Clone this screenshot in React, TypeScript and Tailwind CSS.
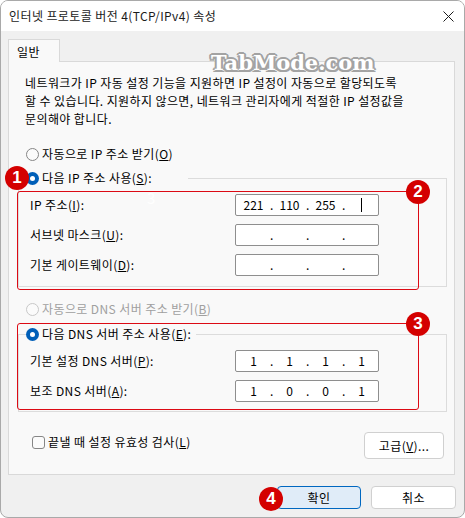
import React from "react";

function Radio({ checked = false, disabled = false }: { checked?: boolean; disabled?: boolean }) {
  if (checked) {
    return (
      <span className="w-[13px] h-[13px] rounded-full bg-[#005fb8] flex items-center justify-center shrink-0">
        <span className="w-[5px] h-[5px] rounded-full bg-white" />
      </span>
    );
  }
  return (
    <span
      className={
        disabled
          ? "w-[13px] h-[13px] rounded-full border border-[#c8c8c8] bg-[#fbfbfb] shrink-0"
          : "w-[13px] h-[13px] rounded-full border border-[#868686] bg-[#fbfbfb] shrink-0"
      }
    />
  );
}

function IpBox({ parts, cursor = false }: { parts: string[]; cursor?: boolean }) {
  return (
    <div className="w-[144px] h-[22px] border border-[#8e8e8e] rounded-[2px] bg-white flex items-center pl-[1px] text-black tracking-normal">
      {[0, 1, 2, 3].map((i) => (
        <React.Fragment key={i}>
          <span className="w-[33px] text-center leading-none flex justify-center items-center h-[14px]">
            {i === 3 && cursor ? <span className="w-[1px] h-[14px] bg-black" /> : parts[i]}
          </span>
          {i < 3 && <span className="w-[3px] text-center leading-none">.</span>}
        </React.Fragment>
      ))}
    </div>
  );
}

function Badge({ n, className }: { n: string; className: string }) {
  return (
    <div
      className={
        "absolute w-[24px] h-[24px] rounded-full bg-[#d40000] text-white flex items-center justify-center font-['Liberation_Sans',Arial,sans-serif] font-bold text-[17px] tracking-normal z-30 " +
        className
      }
    >
      {n}
    </div>
  );
}

export default function App() {
  return (
    <div className="w-[465px] h-[518px] bg-white font-['Noto_Sans_CJK_KR','Noto_Sans',sans-serif] text-[12px] tracking-[0.4px] text-black">
      <div className="relative w-full h-full border border-[#a9a9a9] rounded-[8px] overflow-hidden bg-[#f0f0f0] flex flex-col">
        {/* title bar */}
        <div className="h-[30px] bg-white flex items-center justify-between pl-[8px] pr-[10px] shrink-0">
          <span className="text-[#1b1b1b] leading-none">인터넷 프로토콜 버전 4(TCP/IPv4) 속성</span>
          <svg width="11" height="11" viewBox="0 0 11 11" className="mt-[1px]">
            <path d="M0.5 0.5 L10.5 10.5 M10.5 0.5 L0.5 10.5" stroke="#1b1b1b" strokeWidth="1" />
          </svg>
        </div>

        <div className="pt-[8px] pl-[7px]">
          {/* tab */}
          <div className="relative z-10 w-[52px] h-[23px] -mb-[1px] border border-b-0 border-[#d9d9d9] bg-[#f9f9f9] pl-[8px] pt-[3px]">
            일반
          </div>

          {/* panel */}
          <div className="w-[447px] h-[414px] border border-[#d9d9d9] bg-[#f9f9f9] pl-[9px]">
            <p className="ml-[7px] mt-[12px] leading-[18px] w-[420px]">
              네트워크가 IP 자동 설정 기능을 지원하면 IP 설정이 자동으로 할당되도록
              <br />할 수 있습니다. 지원하지 않으면, 네트워크 관리자에게 적절한 IP 설정값을
              <br />문의해야 합니다.
            </p>

            <div className="ml-[8px] mt-[16px] h-[20px] flex items-center gap-[3px]">
              <Radio />
              <span>
                자동으로 IP 주소 받기(<u>O</u>)
              </span>
            </div>

            <fieldset className="mt-[4px] w-[429px] border border-[#dcdcdc] pb-[10px]">
              <legend className="ml-[7px] pr-[36px] h-[20px] flex items-center gap-[3px]">
                <Radio checked />
                <span>
                  다음 IP 주소 사용(<u>S</u>):
                </span>
              </legend>
              <div className="mt-[6px] flex flex-col gap-[8px] pl-[11px] pr-[67px]">
                <div className="flex items-center justify-between">
                  <span>
                    IP 주소(<u>I</u>):
                  </span>
                  <IpBox parts={["221", "110", "255", ""]} cursor />
                </div>
                <div className="flex items-center justify-between">
                  <span>
                    서브넷 마스크(<u>U</u>):
                  </span>
                  <IpBox parts={["", "", "", ""]} />
                </div>
                <div className="flex items-center justify-between">
                  <span>
                    기본 게이트웨이(<u>D</u>):
                  </span>
                  <IpBox parts={["", "", "", ""]} />
                </div>
              </div>
            </fieldset>

            <div className="ml-[8px] mt-[12px] h-[20px] flex items-center gap-[3px] text-[#a0a0a0]">
              <Radio disabled />
              <span>
                자동으로 DNS 서버 주소 받기(<u>B</u>)
              </span>
            </div>

            <fieldset className="mt-[5px] w-[429px] border border-[#dcdcdc] pb-[9px]">
              <legend className="ml-[7px] pr-[5px] h-[20px] flex items-center gap-[3px]">
                <Radio checked />
                <span>
                  다음 DNS 서버 주소 사용(<u>E</u>):
                </span>
              </legend>
              <div className="mt-[6px] flex flex-col gap-[8px] pl-[11px] pr-[67px]">
                <div className="flex items-center justify-between">
                  <span>
                    기본 설정 DNS 서버(<u>P</u>):
                  </span>
                  <IpBox parts={["1", "1", "1", "1"]} />
                </div>
                <div className="flex items-center justify-between">
                  <span>
                    보조 DNS 서버(<u>A</u>):
                  </span>
                  <IpBox parts={["1", "0", "0", "1"]} />
                </div>
              </div>
            </fieldset>

            <div className="mt-[20px] w-[429px] flex items-start justify-between">
              <div className="ml-[14px] h-[20px] flex items-center gap-[3px]">
                <span className="w-[13px] h-[13px] rounded-[3px] border border-[#868686] bg-[#fbfbfb]" />
                <span>
                  끝낼 때 설정 유효성 검사(<u>L</u>)
                </span>
              </div>
              <button className="mr-[3px] w-[80px] h-[27px] rounded-[4px] border border-[#d0d0d0] bg-white text-black">
                고급(<u>V</u>)...
              </button>
            </div>
          </div>
        </div>

        {/* bottom buttons */}
        <div className="mt-[11px] pr-[8px] flex justify-end gap-[10px]">
          <button className="w-[84px] h-[23px] rounded-[4px] border border-[#0067c0] bg-[#e0ecf8] text-black">
            확인
          </button>
          <button className="w-[85px] h-[23px] rounded-[4px] border border-[#d0d0d0] bg-white text-black">
            취소
          </button>
        </div>

        {/* watermark */}
        <div className="absolute left-[210px] top-[51px] z-20 font-['DejaVu_Serif',serif] font-bold text-[21px] leading-none tracking-normal text-white [text-shadow:2px_0_0_#a3a3a3,-2px_0_0_#a3a3a3,0_2px_0_#a3a3a3,0_-2px_0_#a3a3a3,1.5px_1.5px_0_#a3a3a3,-1.5px_-1.5px_0_#a3a3a3,1.5px_-1.5px_0_#a3a3a3,-1.5px_1.5px_0_#a3a3a3]">
          TabMode.com
        </div>
        <div className="absolute left-[146px] top-[189px] z-20 text-white text-[15px] leading-none">3</div>

        {/* annotations */}
        <div className="absolute left-[16px] top-[190px] w-[402px] h-[99px] border-[1.5px] border-[#dc0a14] rounded-[3px] z-20" />
        <div className="absolute left-[16px] top-[322px] w-[402px] h-[87px] border-[1.5px] border-[#dc0a14] rounded-[3px] z-20" />
        <Badge n="1" className="left-[4px] top-[165px]" />
        <Badge n="2" className="left-[405px] top-[179px]" />
        <Badge n="3" className="left-[405px] top-[311px]" />
        <Badge n="4" className="left-[258px] top-[486px]" />
      </div>
    </div>
  );
}
